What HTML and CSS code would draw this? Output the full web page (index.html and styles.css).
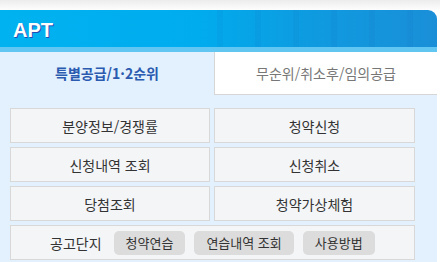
FILE: index.html
```html
<!DOCTYPE html>
<html lang="ko">
<head>
<meta charset="utf-8">
<link rel="stylesheet" href="styles.css">
</head>
<body>
<div class="widget">
  <div class="header"><h1 class="title">APT</h1></div>
  <div class="panel">
    <div class="tabs">
      <div class="tab active">특별공급/1·2순위</div>
      <div class="tab">무순위/취소후/임의공급</div>
    </div>
    <div class="grid">
      <div class="btn">분양정보/경쟁률</div>
      <div class="btn">청약신청</div>
      <div class="btn">신청내역 조회</div>
      <div class="btn">신청취소</div>
      <div class="btn">당첨조회</div>
      <div class="btn">청약가상체험</div>
      <div class="btn wide">
        <span class="label">공고단지</span>
        <span class="chip">청약연습</span>
        <span class="chip">연습내역 조회</span>
        <span class="chip">사용방법</span>
      </div>
    </div>
  </div>
</div>
</body>
</html>
```
FILE: styles.css
```css
html, body {
  margin: 0;
  padding: 0;
}
body {
  width: 440px;
  height: 262px;
  overflow: hidden;
  background: linear-gradient(#ececec 0px, #fafafa 8px, #ffffff 12px);
  font-family: "Noto Sans CJK KR", "Noto Sans", sans-serif;
}
.widget {
  margin-top: 10px;
  width: 437px;
}
.header {
  height: 37px;
  border-bottom: 5px solid #62c6f2;
  border-top-right-radius: 9px;
  background:
    repeating-linear-gradient(90deg, rgba(20,90,180,0) 0 20px, rgba(20,90,180,0.08) 20px 26px, rgba(20,90,180,0) 26px 38px),
    linear-gradient(90deg, #00b2f0 0%, #00acee 45%, #0e9be0 70%, #1a8fd8 100%);
  background-size: 55% 100%, 100% 100%;
  background-position: right top, left top;
  background-repeat: no-repeat;
  display: flex;
  align-items: center;
}
.title {
  margin: 0 0 0 13px;
  padding-top: 3px;
  font-family: "Liberation Sans", Arial, sans-serif;
  font-size: 20px;
  font-weight: bold;
  color: #fff;
  text-shadow: 1px 1px 0 #1f4fb5;
}
.panel {
  background: #e3f0fd;
  height: 210px;
}
.tabs {
  display: grid;
  grid-template-columns: 214px 1fr;
  height: 43px;
}
.tab {
  display: flex;
  align-items: center;
  justify-content: center;
  font-size: 14px;
  color: #777;
  padding-bottom: 1px;
}
.tab.active {
  color: #2b5bb0;
  font-weight: bold;
}
.tab:not(.active) {
  background: #fff;
  border-left: 1px solid #d6d6d6;
  border-bottom: 1px solid #d6d6d6;
}
.grid {
  margin: 13px 22px 0 10px;
  display: grid;
  grid-template-columns: 200px 1fr;
  column-gap: 4px;
  row-gap: 4px;
}
.btn {
  height: 33px;
  background: #f4f5f7;
  border: 1px solid #d8d8d8;
  display: flex;
  align-items: center;
  justify-content: center;
  font-size: 14px;
  color: #333;
}
.btn.wide {
  grid-column: 1 / span 2;
  justify-content: flex-start;
  padding-left: 39px;
}
.label {
  margin-right: 12px;
  font-size: 14px;
}
.chip {
  background: #dcdcdc;
  border-radius: 5px;
  height: 24px;
  display: flex;
  align-items: center;
  padding: 0 12px;
  margin-right: 9px;
  font-size: 13px;
  color: #333;
}
```
